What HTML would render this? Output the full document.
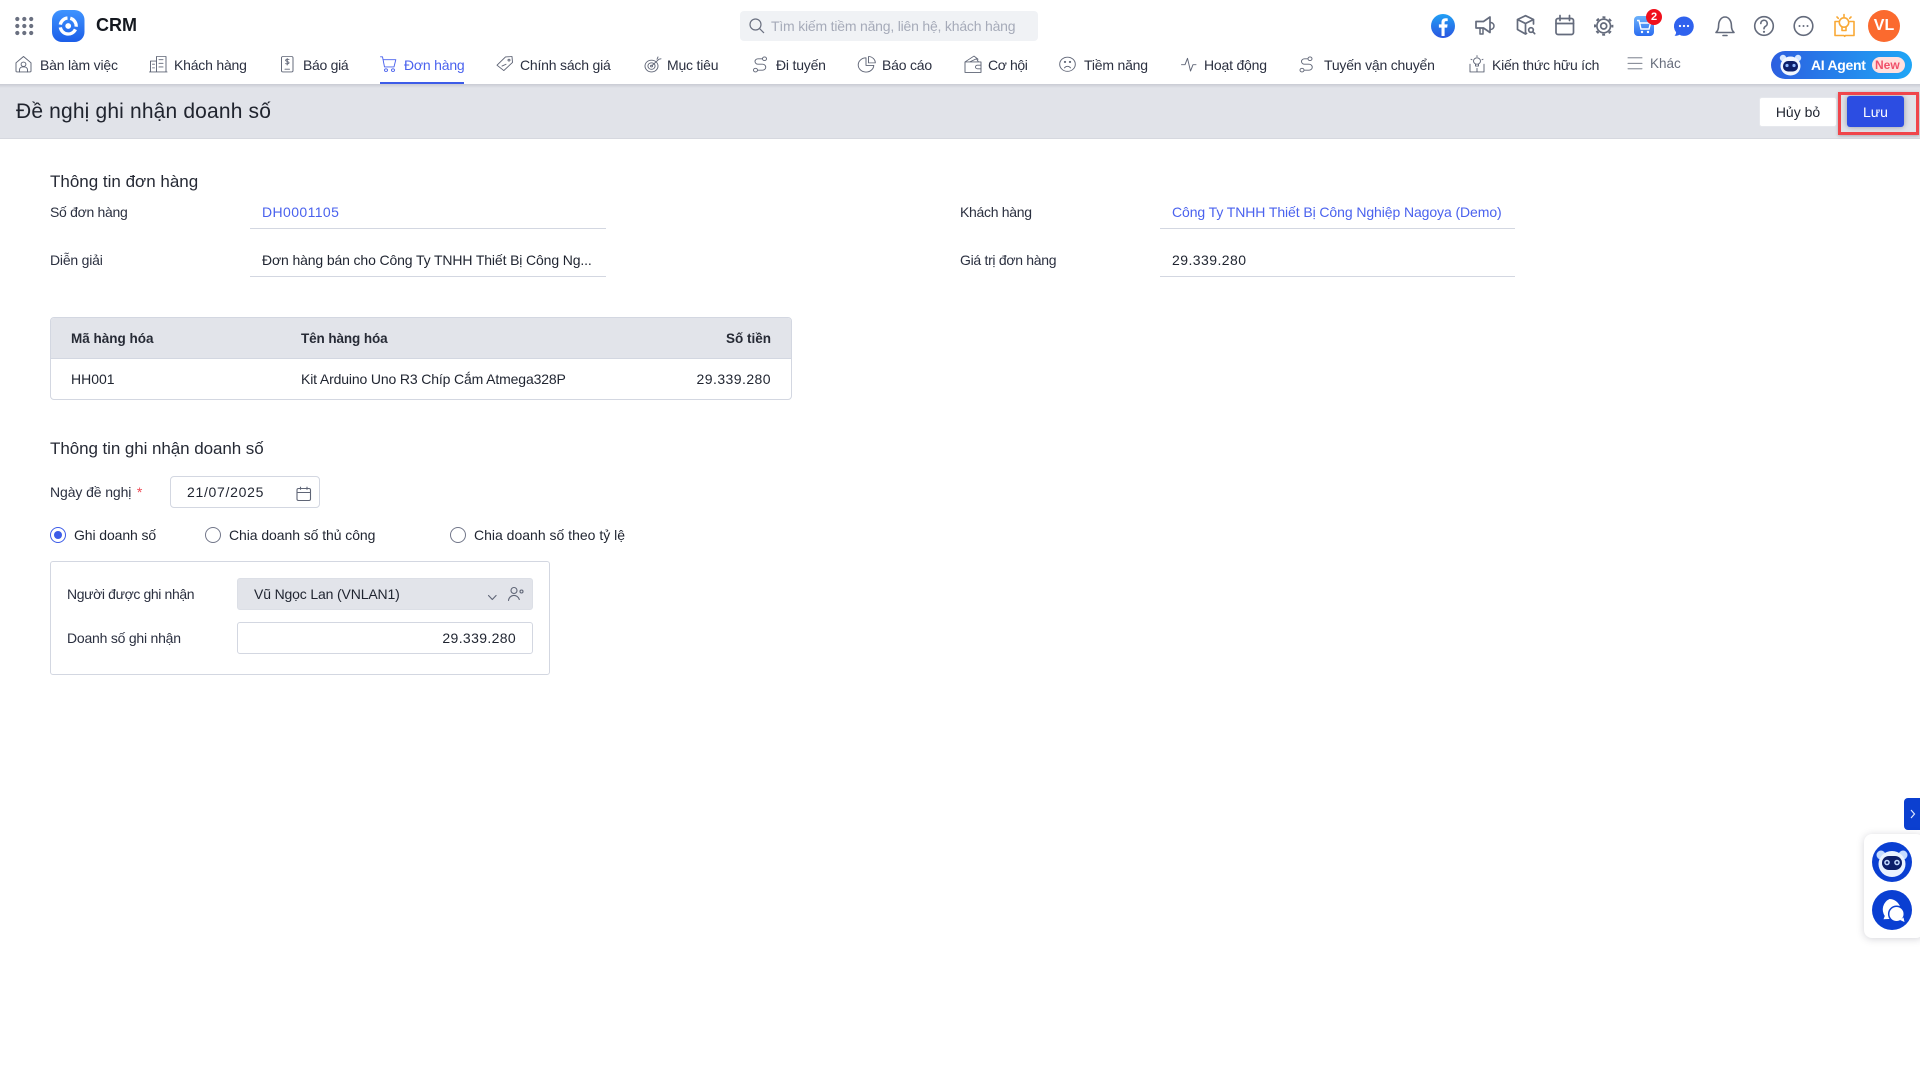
<!DOCTYPE html>
<html lang="vi"><head><meta charset="utf-8"><title>Đề nghị ghi nhận doanh số</title>
<style>
*{box-sizing:border-box}
html,body{margin:0;padding:0;background:#fff}
body{width:1920px;height:1079px;position:relative;overflow:hidden;font-family:"Liberation Sans",sans-serif;font-size:14px;color:#1f2430}
.t{position:absolute;white-space:nowrap;line-height:20px;height:20px}
.n{top:55px;color:#2b3040;letter-spacing:-.2px}
.f{color:#2b3040;letter-spacing:-.3px}
.b{position:absolute}
.l{position:absolute;height:1px;background:#d3d7e1}
svg.o{position:absolute;left:0;top:0;z-index:7}
.bl{color:#4a62ee}
</style></head><body>

<div class="b" style="left:0;top:0;width:1920px;height:84px;background:#fff;z-index:2"></div>
<div class="b" style="left:0;top:84px;width:1920px;height:55px;background:#e1e3e9;border-bottom:1px solid #d6d8df"></div>
<div class="b" style="left:0;top:84px;width:1920px;height:4px;background:linear-gradient(#c9cbd3,#e1e3e9)"></div>

<div style="position:absolute;left:0;top:0;z-index:6">
<div class="b" style="left:740px;top:11px;width:298px;height:30px;background:#f0f2f5;border-radius:4px"></div>
<div class="t" style="left:771px;top:16px;color:#a6abb9;letter-spacing:-.2px">Tìm kiếm tiềm năng, liên hệ, khách hàng</div>
<div class="t" style="left:96px;top:15px;font-size:18px;font-weight:bold;color:#14181f">CRM</div>
<div class="t n" style="left:40px">Bàn làm việc</div>
<div class="t n" style="left:174px">Khách hàng</div>
<div class="t n" style="left:303px;letter-spacing:-.3px">Báo giá</div>
<div class="t n" style="left:404px;color:#4a62ee">Đơn hàng</div>
<div class="t n" style="left:520px">Chính sách giá</div>
<div class="t n" style="left:667px">Mục tiêu</div>
<div class="t n" style="left:776px">Đi tuyến</div>
<div class="t n" style="left:882px">Báo cáo</div>
<div class="t n" style="left:988px;letter-spacing:-.4px">Cơ hội</div>
<div class="t n" style="left:1084px">Tiềm năng</div>
<div class="t n" style="left:1204px">Hoạt động</div>
<div class="t n" style="left:1324px">Tuyến vận chuyển</div>
<div class="t n" style="left:1492px;letter-spacing:-.25px">Kiến thức hữu ích</div>
<div class="t n" style="left:1650px;top:54px;color:#676d7c;font-size:13.5px;letter-spacing:0">Khác</div>
<div class="b" style="left:380px;top:82px;width:84px;height:2px;background:#3d5ce8"></div>

<div class="b" style="left:1771px;top:51px;width:141px;height:28px;border-radius:14px;background:linear-gradient(90deg,#2c5fe0,#1fa6f6)"></div>
<div class="t" style="left:1811px;top:55px;color:#fff;font-weight:bold;font-size:14px;letter-spacing:-.3px">AI Agent</div>
<div class="b" style="left:1872px;top:57px;width:33px;height:16px;border-radius:8px;background:#ffe1df"></div>
<div class="t" style="left:1875px;top:55px;color:#f0506a;font-size:12px;font-weight:bold">New</div>

<div class="b" style="left:1868px;top:10px;width:32px;height:32px;border-radius:50%;background:#fb6a2e;color:#fff;font-weight:bold;font-size:16px;line-height:32px;text-align:center">VL</div>
</div>
<div class="b" style="left:1646px;top:9px;width:16px;height:16px;border-radius:50%;background:#f0101c;color:#fff;font-weight:bold;font-size:11px;line-height:16px;text-align:center;z-index:8">2</div>

<div class="t" style="left:16px;top:100px;height:24px;line-height:24px;font-size:21px;color:#20242e;letter-spacing:.16px">Đề nghị ghi nhận doanh số</div>
<div class="b" style="left:1759px;top:97px;width:78px;height:30px;background:#fff;border-radius:3px;border:1px solid #e6e8ed;text-align:center;line-height:28px;color:#1f2430">Hủy bỏ</div>
<div class="b" style="left:1847px;top:96px;width:57px;height:31px;background:#2c4de2;border-radius:3px;text-align:center;line-height:33px;color:#fff;box-shadow:0 0 6px rgba(90,90,100,.55)">Lưu</div>
<div class="b" style="left:1838px;top:92px;width:81px;height:43px;border:3px solid #f0454b;box-shadow:0 1px 3px rgba(90,90,100,.4)"></div>

<div class="t" style="left:50px;top:172px;font-size:17px;color:#262a35">Thông tin đơn hàng</div>
<div class="t f" style="left:50px;top:202px">Số đơn hàng</div>
<div class="t bl" style="left:262px;top:202px;letter-spacing:.4px">DH0001105</div>
<div class="l" style="left:250px;top:228px;width:356px"></div>
<div class="t f" style="left:50px;top:250px;letter-spacing:-.2px">Diễn giải</div>
<div class="t" style="left:262px;top:250px;letter-spacing:-.13px">Đơn hàng bán cho Công Ty TNHH Thiết Bị Công Ng...</div>
<div class="l" style="left:250px;top:276px;width:356px"></div>

<div class="t f" style="left:960px;top:202px;letter-spacing:-.3px">Khách hàng</div>
<div class="t bl" style="left:1172px;top:202px;letter-spacing:-.09px">Công Ty TNHH Thiết Bị Công Nghiệp Nagoya (Demo)</div>
<div class="l" style="left:1160px;top:228px;width:355px"></div>
<div class="t f" style="left:960px;top:250px">Giá trị đơn hàng</div>
<div class="t" style="left:1172px;top:250px;letter-spacing:.44px">29.339.280</div>
<div class="l" style="left:1160px;top:276px;width:355px"></div>

<div class="b" style="left:50px;top:317px;width:742px;height:83px;border:1px solid #d3d7e1;border-radius:4px;overflow:hidden">
  <div class="b" style="left:0;top:0;width:740px;height:41px;background:#e2e4ea;border-bottom:1px solid #d3d7e1"></div>
</div>
<div class="t" style="left:71px;top:329px;font-weight:bold;font-size:13.5px;color:#262a35">Mã hàng hóa</div>
<div class="t" style="left:301px;top:329px;font-weight:bold;font-size:13.5px;color:#262a35;letter-spacing:-.1px">Tên hàng hóa</div>
<div class="t" style="right:1149px;top:329px;font-weight:bold;font-size:13.5px;color:#262a35">Số tiền</div>
<div class="t" style="left:71px;top:369px">HH001</div>
<div class="t" style="left:301px;top:369px;letter-spacing:-.14px">Kit Arduino Uno R3 Chíp Cắm Atmega328P</div>
<div class="t" style="right:1149px;top:369px;letter-spacing:.44px">29.339.280</div>

<div class="t" style="left:50px;top:439px;font-size:17px;color:#262a35;letter-spacing:-.07px">Thông tin ghi nhận doanh số</div>
<div class="t" style="left:50px;top:482px;color:#2b3040;letter-spacing:-.1px">Ngày đề nghị&nbsp; <span style="color:#ee4a55;margin-left:-2px">*</span></div>
<div class="b" style="left:170px;top:476px;width:150px;height:32px;border:1px solid #d3d7e1;border-radius:4px"></div>
<div class="t" style="left:187px;top:482px;letter-spacing:.7px">21/07/2025</div>

<div class="b" style="left:50px;top:527px;width:16px;height:16px;border-radius:50%;border:1.3px solid #3d5ce8"></div>
<div class="b" style="left:54px;top:531px;width:8px;height:8px;border-radius:50%;background:#3d5ce8"></div>
<div class="t" style="left:74px;top:525px;letter-spacing:-.1px">Ghi doanh số</div>
<div class="b" style="left:205px;top:527px;width:16px;height:16px;border-radius:50%;border:1.3px solid #72778a"></div>
<div class="t" style="left:229px;top:525px;letter-spacing:-.07px">Chia doanh số thủ công</div>
<div class="b" style="left:450px;top:527px;width:16px;height:16px;border-radius:50%;border:1.3px solid #72778a"></div>
<div class="t" style="left:474px;top:525px;letter-spacing:0">Chia doanh số theo tỷ lệ</div>

<div class="b" style="left:50px;top:561px;width:500px;height:114px;border:1px solid #d3d7e1;border-radius:3px"></div>
<div class="t" style="left:67px;top:584px;color:#2b3040;letter-spacing:-.38px">Người được ghi nhận</div>
<div class="b" style="left:237px;top:578px;width:296px;height:32px;background:#e2e4ea;border-radius:3px;border:1px solid #dcdfe6"></div>
<div class="t" style="left:254px;top:584px;letter-spacing:-.15px">Vũ Ngọc Lan (VNLAN1)</div>
<div class="t" style="left:67px;top:628px;color:#2b3040;letter-spacing:-.22px">Doanh số ghi nhận</div>
<div class="b" style="left:237px;top:622px;width:296px;height:32px;border:1px solid #d3d7e1;border-radius:3px"></div>
<div class="t" style="right:1404px;top:628px;letter-spacing:.35px">29.339.280</div>

<div class="b" style="left:1904px;top:798px;width:16px;height:32px;background:#0b3fd0;border-radius:4px 0 0 4px;z-index:3"></div>
<div class="b" style="left:1864px;top:834px;width:60px;height:104px;background:#fff;border-radius:8px;box-shadow:0 1px 8px rgba(60,60,80,.22);z-index:3"></div>

<svg class="o" width="1920" height="1079" viewBox="0 0 1920 1079" fill="none" xmlns="http://www.w3.org/2000/svg">
<defs>
<linearGradient id="lg" x1="0" y1="0" x2="0" y2="1"><stop offset="0" stop-color="#3f94ff"/><stop offset="1" stop-color="#1c5ee8"/></linearGradient>
<linearGradient id="fb" x1="0" y1="0" x2="0" y2="1"><stop offset="0" stop-color="#21a0f5"/><stop offset="1" stop-color="#2a55e0"/></linearGradient>
<linearGradient id="ct" x1="0" y1="0" x2="0" y2="1"><stop offset="0" stop-color="#6cb2fb"/><stop offset="1" stop-color="#2b6cf0"/></linearGradient>
</defs>
<!-- grid -->
<g fill="#6a7080"><circle cx="17.3" cy="19" r="2.1"/><circle cx="24.3" cy="19" r="2.1"/><circle cx="31.2" cy="19" r="2.1"/><circle cx="17.3" cy="26" r="2.1"/><circle cx="24.3" cy="26" r="2.1"/><circle cx="31.2" cy="26" r="2.1"/><circle cx="17.3" cy="33" r="2.1"/><circle cx="24.3" cy="33" r="2.1"/><circle cx="31.2" cy="33" r="2.1"/></g>
<!-- logo -->
<rect x="52" y="10" width="32.5" height="32" rx="10" fill="url(#lg)"/>
<g stroke="#fff" stroke-width="3.3" fill="none"><path d="M60.32 24.61A8 8 0 0 1 67.5 18.03"/><path d="M70.27 18.27A8 8 0 0 1 76.17 26.7"/><path d="M75.45 29.38A8 8 0 0 1 60.32 27.39"/></g>
<circle cx="68.2" cy="26" r="2.9" fill="#fff"/>

<!-- search -->
<g stroke="#6a7080" stroke-width="1.2"><circle cx="755.5" cy="24.5" r="5.5"/><path d="M759.5 28.5l4.5 4.5"/></g>

<!-- nav icons -->
<g stroke="#5f6576" stroke-width=".95" fill="none" stroke-linejoin="round" stroke-linecap="round" transform="translate(0 5.085) scale(1 .91)">
<path d="M16 63.5L23.5 56.5L31 63.5V72.5a1 1 0 0 1-1 1H17a1 1 0 0 1-1-1Z"/><circle cx="23.5" cy="65" r="2.4"/><path d="M19.5 73.5v-2.5a3 3 0 0 1 3-3h2a3 3 0 0 1 3 3v2.5"/>
<path d="M150.5 73.5V61.5h6M156.5 73.5V56.5h9.5v17M149.5 73.5h17.5M159 60h4M159 64h4M159 68h4M152.5 65h2M152.5 69h2"/>
<rect x="281.5" y="56.5" width="11.5" height="17" rx="1.5"/><path d="M285 70.5h4.500M289 59.800c-1.800-.8-3.400-.2-3.400 1s3.400 1.200 3.400 2.500-1.800 1.700-3.400 1M287.200 58.800v7"/>
<g stroke="#4a62ee"><path d="M380.500 56.800h2l2 11.200h9.500l1.800-8h-12.800"/><circle cx="386" cy="71.500" r="1.500"/><circle cx="393" cy="71.500" r="1.500"/></g>
<path d="M497 66l8.500-9 6.500-.5.500 6.500-8.700 9Z"/><circle cx="509" cy="60.500" r="1"/><path d="M502 67l4-2"/>
<circle cx="651.500" cy="67" r="6.500"/><circle cx="651.500" cy="67" r="3.600"/><circle cx="651.500" cy="67" r="1"/><path d="M652 66.500l7-7M657 59.500l1-2.500M659 59.500l2-.5"/>
<circle cx="764.500" cy="59" r="2"/><circle cx="755.500" cy="71.500" r="2"/><path d="M762.500 59h-4.500a3 3 0 0 0 0 6h4.500a3 3 0 0 1 0 6.500h-4.500"/>
<path d="M866 58a7.800 7.800 0 1 0 7.800 8.300h-7.800Z"/><path d="M868.500 56.500a7 7 0 0 1 6.800 7h-6.800Z"/>
<path d="M965 62.500h16v11.500h-16ZM965 62.500l9-6.500 4 3.500M969.500 62.500l7-3.500 2 3.500"/><path d="M981 66h-3.500a1.500 1.500 0 0 0 0 4h3.500"/>
<circle cx="1067.500" cy="65" r="7.800"/><circle cx="1065" cy="62.500" r=".7"/><circle cx="1070" cy="62.500" r=".7"/><path d="M1064.500 69a3.500 3.500 0 0 1 6 0"/>
<path d="M1181.500 65.500h3.500l2.500-7 3 14 2.500-7h3"/>
<circle cx="1310" cy="59" r="2"/><circle cx="1302" cy="71.500" r="2"/><path d="M1307.500 59h-3a3 3 0 0 0 0 6h4.500a3 3 0 0 1 0 6.500h-4.500"/>
<circle cx="1477" cy="61.500" r="3.500"/><path d="M1475.500 65v2h3v-2M1470 65v8.500h14V65M1477 73.500v-4M1471 59.500l1 .6M1483 59.500l-1 .6M1477 55.500v1.200"/>
<path d="M1628 58h14M1628 64h14M1628 70h14" stroke="#676d7c"/>
</g>

<!-- AI robot small -->
<g><circle cx="1783" cy="58" r="3.200" fill="#d8e8ff"/><circle cx="1798" cy="58" r="3.200" fill="#d8e8ff"/><ellipse cx="1790.500" cy="66" rx="10" ry="9.500" fill="#f2f7ff"/><rect x="1783" y="61" width="15" height="10.500" rx="5" fill="#0d1f6a"/><circle cx="1787" cy="65.500" r="1.600" fill="#8fb8ff"/><circle cx="1794" cy="65.500" r="1.600" fill="#8fb8ff"/></g>

<!-- top icons -->
<circle cx="1443" cy="26" r="12" fill="url(#fb)"/>
<path d="M1444.600 36v-8.400h2.600l.4-3.200h-3v-1.800c0-.9.3-1.500 1.600-1.500h1.500v-2.700c-.7-.1-1.600-.2-2.300-.2-2.400 0-3.900 1.400-3.900 4v2.200h-2.600v3.200h2.600V36Z" fill="#fff"/>
<g stroke="#646b7c" stroke-width="1.700" fill="none" stroke-linejoin="round" stroke-linecap="round">
<path d="M1476 21.500h7.500l6.500-4.500v15.500l-6.500-4.500h-7.500Z"/><path d="M1480 28v6h3v-6M1490.500 22.500a3.500 3.500 0 0 1 0 7" stroke-width="1.500"/>
<path d="M1533.500 24v-4.500l-8-3.800-8 3.800v10l8 4.500 1-.6M1517.500 19.500l8 4 8-4M1525.500 23.500v10"/><circle cx="1531" cy="30" r="2.300"/><path d="M1532.700 31.700l2 2"/>
<rect x="1556" y="18.500" width="17.500" height="16" rx="2"/><path d="M1556 23.500h17.500M1560 15.500v5M1569.500 15.500v5"/>
<circle cx="1603.700" cy="26" r="3"/>
<circle cx="1603.700" cy="26" r="6.800"/>
<circle cx="1603.700" cy="26" r="8.700" stroke-width="2" stroke-linecap="butt" stroke-dasharray="3 3.830" stroke-dashoffset="1.500"/>
</g>
<rect x="1634" y="16" width="20" height="20" rx="4" fill="url(#ct)"/>
<g stroke="#fff" stroke-width="1.400" fill="none"><path d="M1637 20.500h2l2 8.500h8l1.500-6h-10.500"/></g><circle cx="1642" cy="32" r="1.200" fill="#fff"/><circle cx="1648" cy="32" r="1.200" fill="#fff"/>
<path d="M1684 16.500a9.700 9.700 0 1 1-4.600 18.200c-1.300.8-3.200 1.300-4.800 1 .9-.9 1.500-2.100 1.500-3.400a9.700 9.700 0 0 1 7.900-15.800Z" fill="#2f62ee"/>
<g fill="#fff"><circle cx="1680" cy="26" r="1.150"/><circle cx="1684" cy="26" r="1.150"/><circle cx="1688" cy="26" r="1.150"/></g>
<g stroke="#646b7c" stroke-width="1.600" fill="none" stroke-linecap="round" stroke-linejoin="round">
<path d="M1716 32.500c2-1.800 2.600-3.800 2.600-7 0-4.500 2.500-8.500 6.400-8.500s6.400 4 6.400 8.500c0 3.200.6 5.200 2.600 7Z"/><path d="M1723 35.500h4"/>
<circle cx="1764" cy="26" r="9.300"/><path d="M1760.800 23.500a3.200 3.200 0 1 1 4.700 2.800c-1 .6-1.500 1.100-1.500 2.400"/>
<circle cx="1803.500" cy="26" r="9.300"/>
</g>
<circle cx="1764" cy="31.800" r="1.100" fill="#646b7c"/>
<g fill="#646b7c"><circle cx="1799.500" cy="26" r="1"/><circle cx="1803.500" cy="26" r="1"/><circle cx="1807.500" cy="26" r="1"/></g>
<g stroke="#f9a936" stroke-width="1.600" fill="none" stroke-linecap="round" stroke-linejoin="round">
<path d="M1839 21.500h-4v14h9l.7.8.7-.8h8.600v-14h-4"/><circle cx="1844" cy="22.500" r="4.700"/><path d="M1842 27v3.500h4V27M1844 14.500v2M1837 17l1.300 1.300M1851 17l-1.300 1.300"/>
</g>

<!-- date icon -->
<g stroke="#5f6576" stroke-width="1.100" fill="none"><rect x="297" y="488.500" width="13.500" height="12" rx="1.500"/><path d="M297 492.500h13.500M300.500 486.800v3M307 486.800v3"/></g>
<!-- select chevron + person -->
<g stroke="#5f6576" stroke-width="1.100" fill="none" stroke-linecap="round" stroke-linejoin="round"><path d="M488.500 595.500l3.800 4 3.800-4"/><circle cx="514" cy="590.500" r="3"/><path d="M508.500 600.500a5.500 5.500 0 0 1 10.800-1"/><circle cx="521.500" cy="591.500" r="1.500"/></g>
<!-- side widgets -->
<path d="M1911 810l3.500 4-3.500 4" stroke="#dfe8ff" stroke-width="1.200" fill="none"/>
<circle cx="1892" cy="862" r="20" fill="#0a3fd2"/>
<circle cx="1881" cy="855" r="4.500" fill="#c6dcff"/><circle cx="1903" cy="855" r="4.500" fill="#c6dcff"/>
<ellipse cx="1892" cy="864" rx="13.500" ry="13" fill="#eaf3ff"/>
<rect x="1882" y="856" width="20" height="14" rx="7" fill="#0d1f6a"/>
<circle cx="1887" cy="862.500" r="2.800" fill="#c6dcff"/><circle cx="1897" cy="862.500" r="2.800" fill="#c6dcff"/><circle cx="1887" cy="862.500" r="1.300" fill="#0d1f6a"/><circle cx="1897" cy="862.500" r="1.300" fill="#0d1f6a"/>
<circle cx="1892" cy="910" r="20" fill="#0a3fd2"/>
<path d="M1889.500 899a11.500 11.500 0 0 1 8 19.500l-14 .8 1.300-3.300a11.500 11.500 0 0 1 4.700-17Z" fill="#fff"/>
<circle cx="1896.500" cy="914" r="7.800" fill="#fff" stroke="#0a3fd2" stroke-width="1.500"/>
<path d="M1900 920l4.500 2-1-4.500Z" fill="#fff"/>
</svg>
</body></html>
